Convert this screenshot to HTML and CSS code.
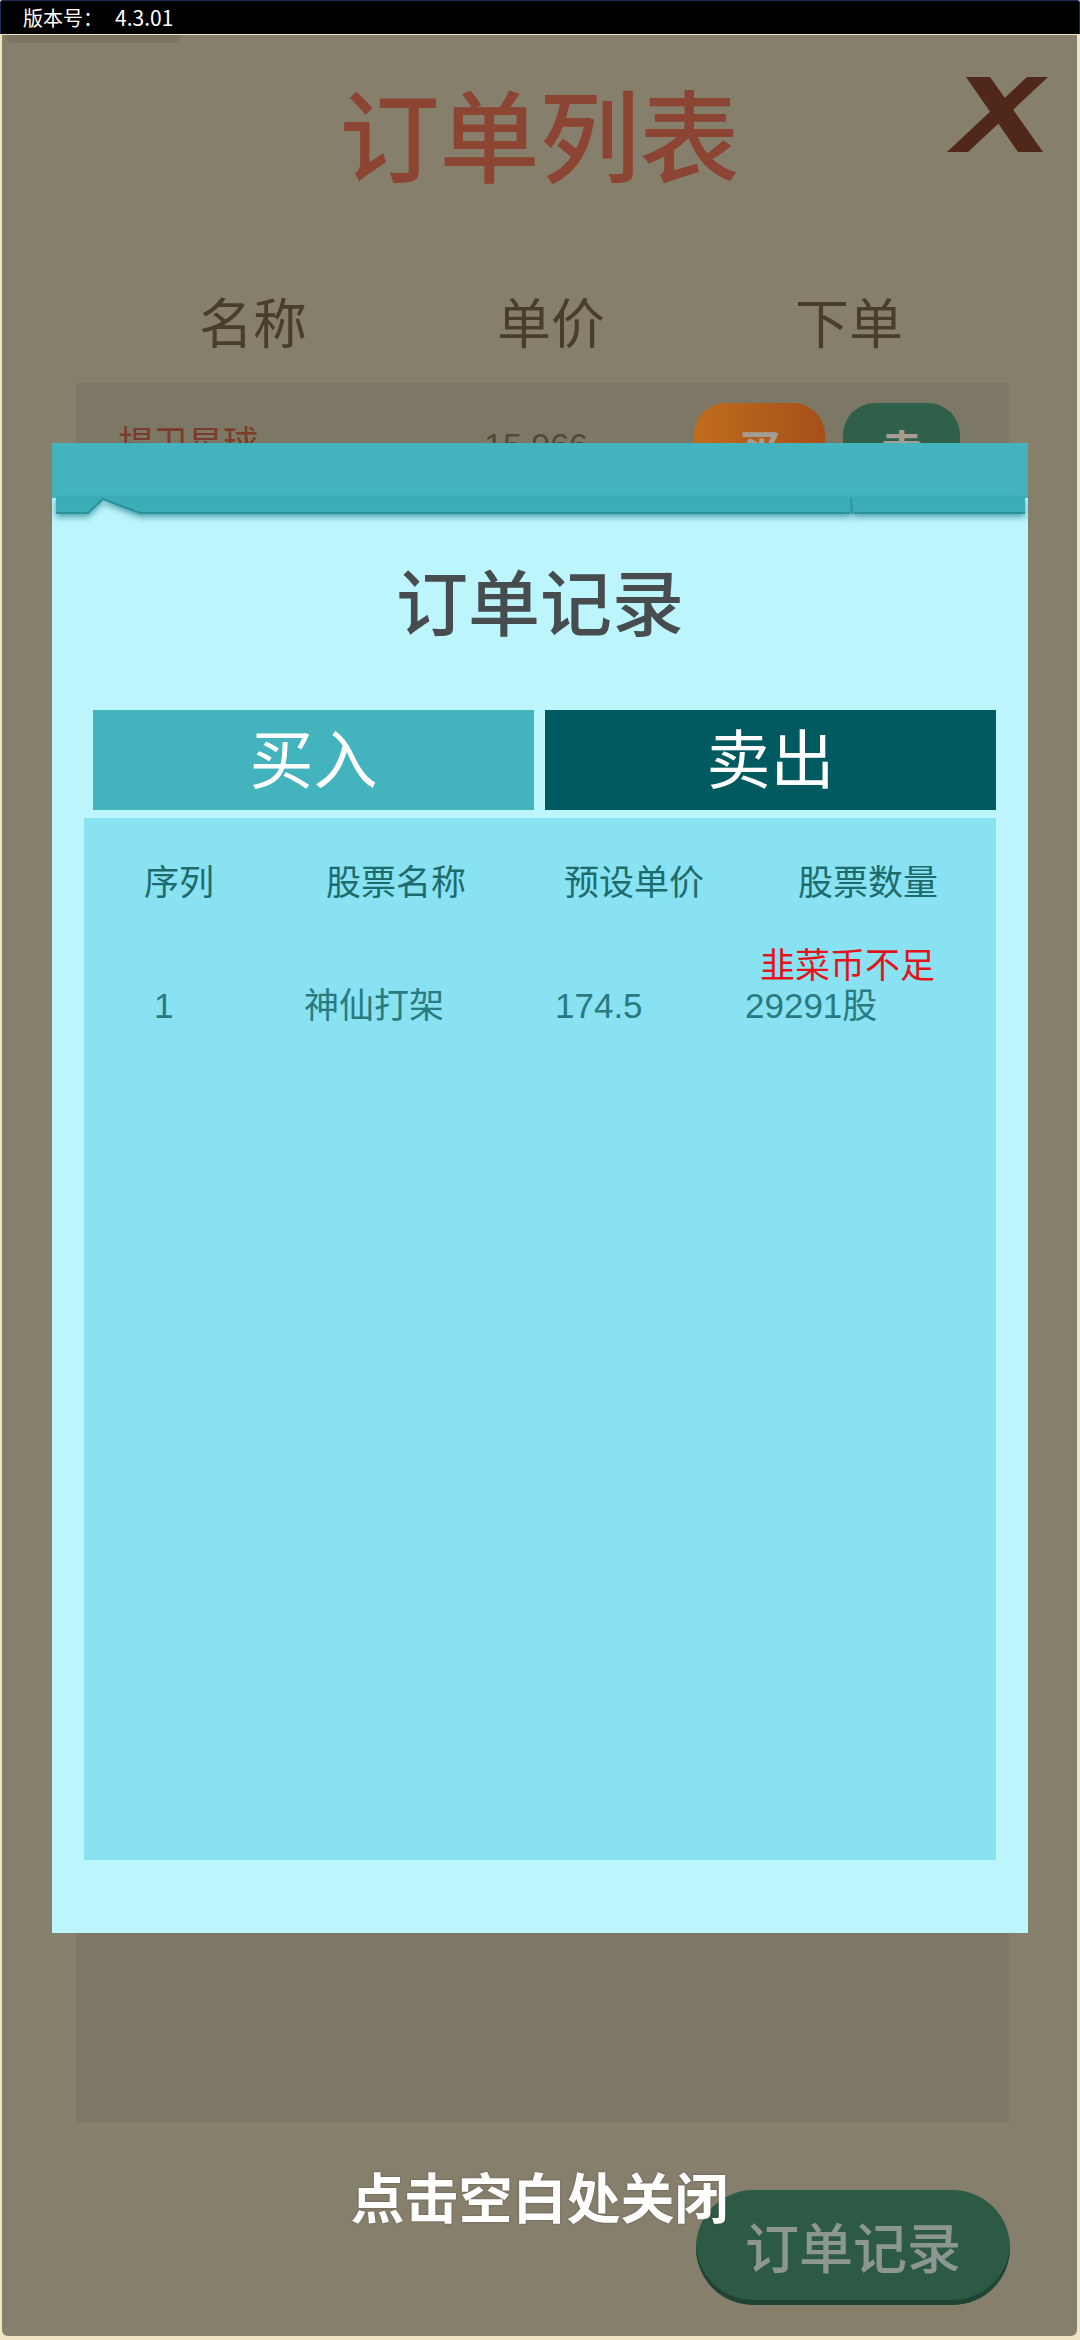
FILE: index.html
```html
<!DOCTYPE html>
<html lang="zh-CN">
<head>
<meta charset="utf-8">
<title>订单记录</title>
<link rel="stylesheet" href="styles.css">
</head>
<body>
<div class="statusbar"><span>版本号：</span><span class="ver">4.3.01</span></div>
<div class="page">
  <div class="notch"></div>
  <header class="head">
    <h1 class="title">订单列表</h1>
    <svg class="close" viewBox="0 0 101 75" aria-label="关闭">
      <polygon points="19,0 43,0 96,75 71,75" fill="#50281a"/>
      <polygon points="80,0 101,0 21,75 0,75" fill="#50281a"/>
    </svg>
  </header>
  <div class="cols"><span>名称</span><span>单价</span><span>下单</span></div>
  <div class="board">
    <div class="row">
      <span class="row-name">捍卫星球</span>
      <span class="row-price">15.966</span>
      <span class="btn-buy">买</span>
      <span class="btn-sell">卖</span>
    </div>
  </div>
  <div class="actions"><div class="record">订单记录</div></div>

  <div class="layer">
    <div class="modal">
      <svg class="ribbon" viewBox="0 0 976 82">
        <defs>
          <filter id="sh" x="-5%" y="-60%" width="110%" height="260%">
            <feDropShadow dx="0" dy="3" stdDeviation="3" flood-color="#1c7c86" flood-opacity="0.7"/>
          </filter>
        </defs>
        <rect x="0" y="0" width="976" height="55" fill="#43b4bd"/>
        <polygon filter="url(#sh)" points="4,54 973,54 973,71 802,71 800,65 798,71 88,71 51,57 36,71 4,71" fill="#3badb7"/>
        <line x1="4" y1="54.5" x2="973" y2="54.5" stroke="#3aa6b0" stroke-width="1"/>
        <polyline points="4,70 36,70 51,56 88,70 798,70" stroke="#2b919a" stroke-width="2" fill="none"/>
        <polyline points="802,70 973,70" stroke="#2b919a" stroke-width="2" fill="none"/>
        <line x1="799" y1="55" x2="800" y2="71" stroke="#2a8f98" stroke-width="1.5"/>
      </svg>
      <h2 class="modal-title">订单记录</h2>
      <div class="tabs">
        <div class="tab tab-buy">买入</div>
        <div class="tab tab-sell">卖出</div>
      </div>
      <div class="panel">
        <div class="thead">
          <span>序列</span><span>股票名称</span><span>预设单价</span><span>股票数量</span>
        </div>
        <div class="trow">
          <span>1</span>
          <span>神仙打架</span>
          <span>174.5</span>
          <span class="qty"><span class="warn">韭菜币不足</span><span>29291股</span></span>
        </div>
      </div>
    </div>
    <p class="hint">点击空白处关闭</p>
  </div>
</div>
</body>
</html>
```

FILE: styles.css
```css
* {
  box-sizing: border-box;
  margin: 0;
  padding: 0;
}

html, body {
  width: 1080px;
  height: 2340px;
  overflow: hidden;
}

body {
  background: #efe4c4;
  font-family: "Noto Sans CJK SC", "Noto Sans", sans-serif;
}

.statusbar {
  height: 34px;
  background: #000;
  border: 1px solid #1d2a52;
  border-bottom: none;
  border-radius: 3px 3px 0 0;
  color: #fff;
  font-size: 20px;
  line-height: 32px;
  padding-left: 22px;
}

.ver {
  margin-left: 12px;
  font-size: 21px;
}

.page {
  margin: 1px 3px 0 2px;
  height: 2301px;
  background: #867f6c;
  border-radius: 0 0 6px 6px;
  position: relative;
  overflow: hidden;
}

.notch {
  width: 176px;
  height: 8px;
  margin-left: 3px;
  background: #7b7463;
  border-radius: 0 0 12px 12px;
}

.head {
  position: relative;
  margin-top: 39px;
  height: 100px;
  text-align: center;
}

.title {
  font-size: 100px;
  line-height: 100px;
  font-weight: 500;
  color: #8c4433;
}

.close {
  position: absolute;
  right: 29px;
  top: -5px;
  width: 101px;
  height: 75px;
}

.cols {
  margin-top: 112px;
  margin-left: 102px;
  display: grid;
  grid-template-columns: repeat(3, 298px);
  font-size: 54px;
  line-height: 54px;
  color: #4a3d2b;
  text-align: center;
}

.board {
  margin: 35px 0 0 74px;
  width: 933px;
  height: 1739px;
  background: #7d7766;
  padding-top: 20px;
}

.row {
  display: flex;
  align-items: flex-start;
  padding-left: 42px;
}

.row-name {
  width: 366px;
  margin-top: 20px;
  font-size: 35px;
  line-height: 35px;
  color: #7b3b2a;
}

.row-price {
  width: 210px;
  margin-top: 25px;
  font-family: "Liberation Sans", "Noto Sans CJK SC", sans-serif;
  font-size: 34px;
  line-height: 34px;
  color: #54483a;
}

.btn-buy,
.btn-sell {
  height: 90px;
  border-radius: 32px;
  font-size: 42px;
  line-height: 90px;
  text-align: center;
  color: #a39d92;
  font-weight: 700;
}

.btn-buy {
  width: 131px;
  background: linear-gradient(90deg, #c06c1c, #a64f1a);
}

.btn-sell {
  width: 117px;
  margin-left: 18px;
  background: #30604a;
}

.actions {
  margin-top: 68px;
  display: flex;
  justify-content: flex-end;
  padding-right: 67px;
}

.record {
  width: 314px;
  height: 115px;
  border-radius: 58px;
  background: #2d5a45;
  box-shadow: inset 0 -5px 0 #1f4433;
  color: #8d9792;
  font-size: 54px;
  line-height: 112px;
  font-weight: 500;
  text-align: center;
}

.layer {
  position: absolute;
  top: 0;
  left: 0;
  right: 0;
  bottom: 0;
}

.modal {
  margin: 408px 0 0 50px;
  width: 976px;
  height: 1490px;
  background: #bdf5fd;
}

.ribbon {
  display: block;
  width: 976px;
  height: 82px;
}

.modal-title {
  margin-top: 38px;
  text-align: center;
  font-size: 72px;
  line-height: 72px;
  font-weight: 500;
  color: #474c4e;
}

.tabs {
  display: flex;
  gap: 11px;
  margin: 75px 0 0 41px;
}

.tab {
  height: 100px;
  font-size: 64px;
  line-height: 90px;
  text-align: center;
  color: #fff;
}

.tab-buy {
  width: 441px;
  background: #43b4bd;
}

.tab-sell {
  width: 451px;
  background: #015a5f;
}

.panel {
  margin: 8px 0 0 32px;
  width: 912px;
  height: 1042px;
  background: #88e2f2;
  padding-top: 45px;
  font-family: "Liberation Sans", "Noto Sans CJK SC", sans-serif;
}

.thead {
  display: grid;
  grid-template-columns: 190px 244px 232px 236px;
  font-size: 35px;
  line-height: 40px;
  color: #1d6b6d;
  text-align: center;
}

.trow {
  display: grid;
  grid-template-columns: 150px 251px 190px 1fr;
  align-items: end;
  padding-left: 70px;
  margin-top: 43px;
  font-size: 35px;
  line-height: 40px;
  color: #2a7a7f;
}

.qty {
  display: flex;
  flex-direction: column;
}

.warn {
  color: #e3141b;
  margin-left: 15px;
}

.hint {
  margin-top: 236px;
  text-align: center;
  font-size: 54px;
  line-height: 54px;
  font-weight: 700;
  color: #fff;
  text-shadow: 0 0 2px rgba(60, 50, 40, 0.6);
}
```
